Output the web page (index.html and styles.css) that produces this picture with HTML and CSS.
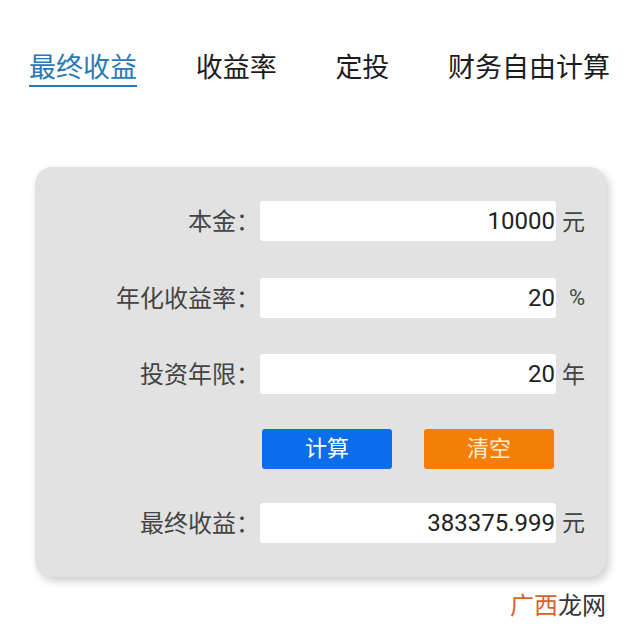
FILE: index.html
```html
<!DOCTYPE html>
<html lang="zh-CN">
<head>
  <meta charset="UTF-8" />
  <meta name="viewport" content="width=device-width, initial-scale=1.0" />
  <title>收益计算器</title>
  <link rel="stylesheet" href="styles.css">
</head>
<body>
  <nav class="tabs">
    <a class="tab active">最终收益</a>
    <a class="tab">收益率</a>
    <a class="tab">定投</a>
    <a class="tab">财务自由计算</a>
  </nav>

  <div class="card">
    <div class="row">
      <label class="label">本金：</label>
      <input class="field" type="text" value="10000" readonly>
      <span class="unit">元</span>
    </div>
    <div class="row">
      <label class="label">年化收益率：</label>
      <input class="field" type="text" value="20" readonly>
      <span class="unit percent">%</span>
    </div>
    <div class="row">
      <label class="label">投资年限：</label>
      <input class="field" type="text" value="20" readonly>
      <span class="unit">年</span>
    </div>
    <div class="actions">
      <button class="btn btn-blue">计算</button>
      <button class="btn btn-orange">清空</button>
    </div>
    <div class="row">
      <label class="label">最终收益：</label>
      <input class="field" type="text" value="383375.999" readonly>
      <span class="unit">元</span>
    </div>
  </div>

  <div class="watermark"><span class="mark-accent">广西</span>龙网</div>
</body>
</html>
```

FILE: styles.css
```css
body {
  margin: 0;
  background: #fff;
  font-family: Roboto, "Noto Sans CJK SC", sans-serif;
  color: #222;
}
.tabs {
  display: flex;
  gap: 58.7px;
  padding: 49px 0 0 29px;
  height: 38px;
}
.tab {
  font-size: 27px;
  line-height: 38px;
  height: 36px;
  color: #1c1c1c;
  white-space: nowrap;
}
.tab.active {
  color: #2a78b8;
  border-bottom: 2px solid #2a78b8;
}
.card {
  margin: 80px 0 0 35px;
  width: 571px;
  height: 376px;
  padding-top: 34px;
  background: #e2e2e2;
  border-radius: 17px;
  box-shadow: 3px 4px 8px rgba(0, 0, 0, 0.2);
}
.row {
  display: flex;
  align-items: center;
  height: 40px;
  margin-bottom: 36.5px;
}
.label {
  width: 225px;
  padding-bottom: 3px;
  font-size: 24px;
  text-align: right;
  color: #444;
  white-space: nowrap;
}
.field {
  width: 296px;
  height: 40px;
  box-sizing: border-box;
  padding: 0 1px 0 0;
  border: none;
  border-radius: 3px;
  background: #fff;
  font-family: Roboto, "Noto Sans CJK SC", sans-serif;
  font-size: 24px;
  color: #222;
  text-align: right;
}
.unit {
  margin-left: 6px;
  padding-bottom: 3px;
  font-size: 23px;
  color: #444;
}
.unit.percent {
  margin-left: 13px;
  padding-bottom: 0;
  font-size: 22px;
}
.actions {
  display: flex;
  gap: 32px;
  margin: -2px 0 34px 227px;
}
.btn {
  width: 130px;
  height: 40px;
  padding: 0 0 6px;
  border: none;
  border-radius: 3px;
  font-family: Roboto, "Noto Sans CJK SC", sans-serif;
  font-size: 22px;
  color: #fff;
}
.btn-blue {
  background: #0a6deb;
}
.btn-orange {
  background: #f47e06;
  color: #fdeeda;
}
.watermark {
  margin: 14px 0 0 510px;
  font-size: 24px;
  line-height: 30px;
  color: #333;
}
.mark-accent {
  color: #d9622b;
}
```
